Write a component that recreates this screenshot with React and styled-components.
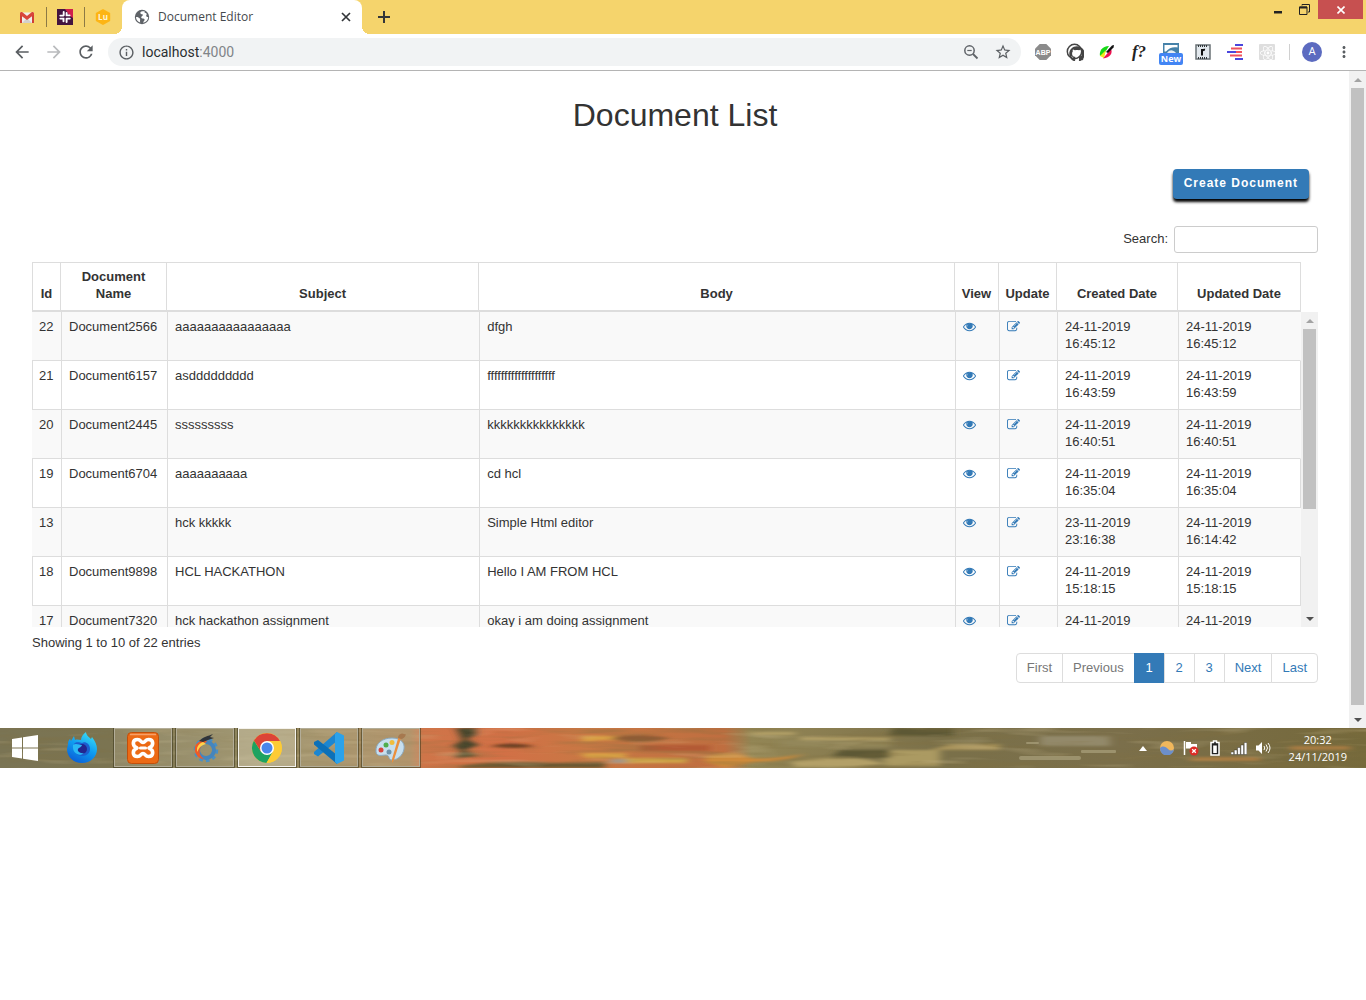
import React from "react";
import styled, { createGlobalStyle, css } from "styled-components";
import {
  MdArrowBack,
  MdArrowForward,
  MdRefresh,
  MdOutlineInfo,
  MdStarOutline,
  MdMoreVert,
} from "react-icons/md";
import { FaReact, FaGithub } from "react-icons/fa";

const GlobalStyle = createGlobalStyle`
  *, *::before, *::after { box-sizing: border-box; }
  body {
    margin: 0;
    background: #fff;
    font-family: "Liberation Sans", Arial, sans-serif;
    color: #333;
  }
  button, input { font: inherit; color: inherit; }
  button { border: 0; padding: 0; background: none; cursor: pointer; }
  svg { display: block; flex: none; }
`;

const uiFont = `"Open Sans", "Noto Sans", sans-serif`;

/* ---------- browser chrome ---------- */

const TabStrip = styled.header`
  display: flex;
  height: 34px;
  padding-left: 8px;
  background: #f5d46c;
  font-family: ${uiFont};
`;

const PinnedTab = styled.button`
  display: flex;
  align-items: center;
  justify-content: center;
  width: 38px;
  height: 34px;
`;

const PinDivider = styled.span`
  align-self: center;
  width: 1px;
  height: 20px;
  margin-right: -1px;
  background: #8c7a45;
`;

const ActiveTab = styled.div`
  display: flex;
  align-items: center;
  position: relative;
  width: 240px;
  padding: 0 8px 0 12px;
  gap: 8px;
  background: #fff;
  border-radius: 8px 8px 0 0;
  color: #45494d;
  font-size: 12px;
  line-height: 16px;

  &::before,
  &::after {
    content: "";
    position: absolute;
    bottom: 0;
    width: 8px;
    height: 8px;
  }
  &::before {
    left: -8px;
    background: radial-gradient(circle at 0 0, transparent 8px, #fff 8px);
  }
  &::after {
    right: -8px;
    background: radial-gradient(circle at 100% 0, transparent 8px, #fff 8px);
  }
`;

const TabTitle = styled.span`
  flex: 1;
`;

const TabButton = styled.button`
  display: flex;
  align-items: center;
  justify-content: center;
  width: ${(p) => p.$width}px;
  color: #333639;
`;

const WindowControls = styled.div`
  display: flex;
  margin-left: auto;
  padding-right: 3px;
  height: 19px;
`;

const WindowButton = styled.button`
  display: flex;
  align-items: center;
  justify-content: center;
  width: ${(p) => (p.$close ? 45 : 27)}px;
  background: ${(p) => (p.$close ? "#c75050" : "transparent")};
`;

const Toolbar = styled.nav`
  display: flex;
  align-items: center;
  height: 37px;
  padding: 0 6px;
  border-bottom: 1px solid #b4b4b4;
  background: #fff;
`;

const ToolButton = styled.button`
  display: flex;
  flex: none;
  align-items: center;
  justify-content: center;
  width: 32px;
  height: 28px;
  color: ${(p) => (p.$dim ? "#b9bbbd" : "#5a5e62")};
`;

const Omnibox = styled.div`
  display: flex;
  flex: 1;
  align-items: center;
  height: 28px;
  margin: 0 6px;
  padding: 0 2px;
  border-radius: 14px;
  background: #f1f3f4;
`;

const Address = styled.span`
  flex: 1;
  font-family: Roboto, sans-serif;
  font-size: 14px;
  line-height: 20px;
  color: #2b2e31;

  span { color: #808488; }
`;

const ToolDivider = styled.span`
  width: 1px;
  height: 16px;
  margin: 0 6px;
  background: #d0d0d0;
`;

const Avatar = styled.button`
  width: 20px;
  height: 20px;
  margin: 0 6px;
  border-radius: 50%;
  background: #5c6bc0;
  color: #fff;
  font-family: Roboto, sans-serif;
  font-size: 11px;
  line-height: 20px;
`;

const FunctionGlyph = styled.span`
  font: italic bold 17px/20px "Liberation Serif", serif;
  color: #222;
`;

const NewBadge = styled.span`
  display: flex;
  flex-direction: column;
  align-items: center;
  padding-top: 4px;

  span {
    width: 24px;
    border-radius: 2px;
    background: #4285f4;
    color: #fff;
    font: bold 9px/12px ${uiFont};
  }
`;

/* ---------- scrollbars ---------- */

const Track = styled.div`
  display: flex;
  flex: none;
  flex-direction: column;
  align-items: center;
  width: 17px;
  background: #f1f1f1;
`;

const Arrow = styled.span`
  display: flex;
  align-items: center;
  justify-content: center;
  width: 17px;
  height: 17px;

  &::before {
    content: "";
    border: 4px solid transparent;
    ${(p) =>
      p.$down
        ? css`border-top-color: #505050; border-bottom-width: 0;`
        : css`border-bottom-color: #a3a3a3; border-top-width: 0;`}
  }
`;

const ThumbLane = styled.div`
  flex: 1;
  width: 13px;
`;

const Thumb = styled.div`
  height: ${(p) => p.$size}%;
  background: #c1c1c1;
`;

const Scrollbar = ({ size }) => (
  <Track aria-hidden="true">
    <Arrow />
    <ThumbLane>
      <Thumb $size={size} />
    </ThumbLane>
    <Arrow $down />
  </Track>
);

/* ---------- page ---------- */

const Viewport = styled.div`
  display: flex;
`;

const Page = styled.main`
  flex: 1;
  min-width: 0;
  padding: 26px 31px 45px 32px;
  font-size: 13px;
  line-height: 17px;
`;

const Title = styled.h1`
  margin: 0 0 36px;
  font-size: 32px;
  font-weight: 400;
  line-height: 36px;
  text-align: center;
`;

const Actions = styled.div`
  display: flex;
  justify-content: flex-end;
  padding-right: 9px;
`;

const CreateButton = styled.button`
  height: 30px;
  padding: 0 11px 2px;
  border-radius: 4px;
  background: #337ab7;
  box-shadow: 0 3px 3px #000;
  color: #fff;
  font-size: 12px;
  font-weight: 700;
  letter-spacing: 1px;
`;

const SearchRow = styled.div`
  display: flex;
  align-items: center;
  justify-content: flex-end;
  gap: 6px;
  margin: 27px 0 9px;

  label { padding-bottom: 2px; }
`;

const SearchInput = styled.input`
  width: 144px;
  height: 27px;
  padding: 4px 9px;
  border: 1px solid #ccc;
  border-radius: 3px;
  background: #fff;
`;

const HeadArea = styled.div`
  padding-right: 17px;
`;

const Grid = styled.table`
  width: 100%;
  table-layout: fixed;
  border-collapse: separate;
  border-spacing: 0;
`;

const Col = styled.col`
  width: ${(p) => p.$width};
`;

const Th = styled.th`
  padding: 5px 4px 8px;
  border: solid #ddd;
  border-width: 1px 1px 2px 0;
  vertical-align: bottom;

  &:first-child { border-left-width: 1px; padding: 5px 3px 8px; }
`;

const ScrollArea = styled.div`
  display: flex;
  height: 315px;
`;

const ScrollBody = styled.div`
  flex: 1;
  min-width: 0;
  overflow: hidden;
`;

const Row = styled.tr`
  height: 49px;

  &:nth-child(odd) { background: #f9f9f9; }
  &:nth-child(even) td:first-child { border-left: 1px solid #ddd; padding-left: 6px; }
  &:nth-child(odd) td:last-child { border-right-color: #f9f9f9; }
`;

const Td = styled.td`
  padding: 6px 7px 8px;
  border: solid #ddd;
  border-width: 0 1px 1px 0;
  vertical-align: top;
`;

const IconLink = styled.a`
  display: inline-block;
  padding-top: 2px;
  color: #337ab7;
`;

const Info = styled.div`
  padding: 7px 0 2px;
`;

const Pager = styled.ul`
  display: flex;
  justify-content: flex-end;
  margin: 0;
  padding: 0;
  list-style: none;

  li + li { margin-left: -1px; }
  li:first-child a { border-radius: 4px 0 0 4px; }
  li:last-child a { border-radius: 0 4px 4px 0; }
`;

const PageLink = styled.a`
  display: block;
  min-width: 31px;
  height: 30px;
  padding: 5px 10px;
  border: 1px solid ${(p) => (p.$active ? "#337ab7" : "#ddd")};
  background: ${(p) => (p.$active ? "#337ab7" : "#fff")};
  color: ${(p) => (p.$active ? "#fff" : p.$disabled ? "#777" : "#337ab7")};
  line-height: 18px;
  text-align: center;
  text-decoration: none;
`;

/* ---------- taskbar ---------- */

const Taskbar = styled.footer`
  display: flex;
  position: relative;
  height: 40px;
  overflow: hidden;
  background: #756b49;
`;

const Wallpaper = styled.svg`
  position: absolute;
  inset: 0;
  width: 100%;
  height: 100%;
`;

const Apps = styled.div`
  display: flex;
  position: relative;
  gap: 4px;
`;

const AppButton = styled.button`
  display: flex;
  align-items: center;
  justify-content: center;
  width: ${(p) => p.$width || 58}px;
  height: 39px;
  ${(p) =>
    p.$open &&
    css`
      border: 1px solid ${p.$current ? "#f4f2ec" : "#b3ad98"};
      background: rgba(225, 215, 190, ${p.$current ? 0.45 : 0.2});
      outline: 1px solid rgba(50, 45, 20, 0.5);
    `}
`;

const Tray = styled.div`
  display: flex;
  position: relative;
  align-items: center;
  margin-left: auto;
  padding-right: 19px;
`;

const TrayButton = styled.button`
  display: flex;
  align-items: center;
  justify-content: center;
  width: 24px;
  height: 40px;
`;

const Clock = styled.div`
  margin-left: 14px;
  color: #fff;
  font-family: ${uiFont};
  font-size: 11px;
  line-height: 17px;
  text-align: center;
`;

/* ---------- drawings ---------- */

const GmailIcon = () => (
  <svg width="16" height="16" viewBox="0 0 16 16">
    <path d="M1 3.500h14V14H1z" fill="#efeeec" />
    <path d="M3 14 8 9l5 5z" fill="#d3d0cc" />
    <path d="M1 14V4l2 1.500V14zM15 14V4l-2 1.500V14z" fill="#cf4036" />
    <path d="M1 4.500C1 3 2.500 2.600 3.400 3.300L8 7l4.600-3.700C13.500 2.600 15 3 15 4.500v1.200L8 11 1 5.700z" fill="#d9453a" />
  </svg>
);

const SlackIcon = () => (
  <svg width="16" height="16" viewBox="0 0 16 16">
    <path d="M0 0h16v16H0z" fill="#42143f" />
    <path d="M8 0h8v9l-3-2z" fill="#d0204c" />
    <g stroke="#fff" strokeWidth="1.900" strokeLinecap="round">
      <path d="M6.700 3v3.200M3.300 6.600h3.200M9.600 4v2.400h3M3.300 9.600h3.200v2.600M9.600 9.600v3.400M9.600 9.600h3.200" fill="none" />
    </g>
  </svg>
);

const LuIcon = () => (
  <svg width="18" height="18" viewBox="0 0 18 18">
    <path d="M9 2l6.200 3.500v7L9 16l-6.200-3.500v-7z" fill="#fdb515" stroke="#fdb515" strokeWidth="2" strokeLinejoin="round" />
    <text x="9" y="12" fontSize="8" fontWeight="700" textAnchor="middle" fill="#fff4d8" fontFamily="Open Sans, sans-serif">Lu</text>
  </svg>
);

const GlobeIcon = () => (
  <svg width="16" height="16" viewBox="0 0 16 16">
    <circle cx="8" cy="8" r="7.200" fill="#5f6368" />
    <path d="M8.500 2.300C6.700 2.600 6 3.500 6.500 4.500s2 .3 2.300 1.300-1.300 1.200-1.600 2.400c-.2 1 1 1.200 2 1.300 1.100.2 1.600.8 1.300 1.700-.3.800-1.200 1.200-1.300 2.500 3-.6 5-3 5-5.700-1 .3-1.700 0-2-.9-.3-1 .8-1.300.4-2.300-.3-.8-1.500-.6-2-1.200-.3-.5.200-1 .1-1.300z" fill="#fff" />
    <path d="M2 8c1.500-.2 3 .4 3.800 1.500.7 1 .2 1.800.2 2.800 0 .6.300 1 .2 1.300C3.800 13 2 10.800 2 8z" fill="#fff" />
  </svg>
);

const CloseTabIcon = () => (
  <svg width="10" height="10" viewBox="0 0 10 10" stroke="#333639" strokeWidth="1.700">
    <path d="M1 1l8 8M9 1 1 9" />
  </svg>
);

const NewTabIcon = () => (
  <svg width="12" height="12" viewBox="0 0 12 12" stroke="#333639" strokeWidth="2">
    <path d="M6 0v12M0 6h12" />
  </svg>
);

const ZoomOutIcon = () => (
  <svg width="16" height="16" viewBox="0 0 16 16" fill="none" stroke="#5f6368">
    <circle cx="6.500" cy="6.500" r="4.700" strokeWidth="1.500" />
    <path d="M10 10l4.500 4.500" strokeWidth="1.800" />
    <path d="M4.300 6.500h4.400" strokeWidth="1.200" />
  </svg>
);

const AbpIcon = () => (
  <svg width="18" height="18" viewBox="0 0 18 18">
    <path d="M5.700 1h6.600L17 5.700v6.600L12.300 17H5.700L1 12.300V5.700z" fill="#8b8b8b" />
    <text x="9" y="12" fontSize="7" fontWeight="700" textAnchor="middle" fill="#fff" fontFamily="Liberation Sans, sans-serif">ABP</text>
  </svg>
);

const GitSearchIcon = () => (
  <svg width="18" height="18" viewBox="0 0 18 18">
    <FaGithub x="3" y="3" width="11" height="11" color="#444" />
    <circle cx="8.500" cy="8.500" r="7.200" fill="none" stroke="#444" strokeWidth="1.500" />
    <path d="M13.500 13.500 16.800 16.800" stroke="#444" strokeWidth="2.200" />
  </svg>
);

const BrushIcon = () => (
  <svg width="18" height="18" viewBox="0 0 18 18">
    <path d="M2 13C1 8 4 3.500 11 3L6 11z" fill="#16d916" />
    <path d="M2 13 8 7l-2 8z" fill="#f3ea1b" />
    <path d="M5 15.500 13 6c2 4-1 9-8 9.500z" fill="#ee1150" />
    <path d="M8 9 14 2.500l2-.5-.5 2.500L10 10z" fill="#111" />
  </svg>
);

const PictureIcon = () => (
  <svg width="16" height="10" viewBox="0 0 16 10">
    <path d="M0 0h16v10H0z" fill="#4682a9" />
    <path d="M1.500 2h13v2.500C10 3.500 6 5 3 8.500H1.500z" fill="#fff" />
    <path d="M4 10c3-4 6-3 9 0z" fill="#e6eef3" />
  </svg>
);

const ReaderIcon = () => (
  <svg width="16" height="16" viewBox="0 0 16 16">
    <rect x="1" y="1" width="14" height="14" fill="#e3e9ee" stroke="#6a7176" strokeWidth="1.500" />
    <path d="M3 2h10M3 14h10" stroke="#33383b" strokeWidth="2" strokeDasharray="1 1" />
    <path d="M7 5v6.500M7 7.200C7.500 5.800 8.500 5.500 10 5.800" stroke="#111" strokeWidth="2" fill="none" />
  </svg>
);

const BarsIcon = () => (
  <svg width="16" height="16" viewBox="0 0 16 16">
    <path d="M8 1h8M0 8h10M8 15h8" stroke="#4a46dd" strokeWidth="2" />
    <path d="M4 4.500h11M3 11.500h12M9 8h6" stroke="#f0525f" strokeWidth="2" />
  </svg>
);

const ReactTile = () => (
  <svg width="16" height="16" viewBox="0 0 16 16">
    <rect width="16" height="16" rx="1" fill="#dedede" />
    <FaReact x="1" y="1" width="14" height="14" color="#fff" />
  </svg>
);

const EyeIcon = () => (
  <svg width="13" height="13" viewBox="0 0 1792 1792" fill="currentColor">
    <path d="M1664 960q-152-236-381-353 61 104 61 225 0 185-131.500 316.500t-316.500 131.500-316.500-131.500-131.500-316.500q0-121 61-225-229 117-381 353 133 205 333.500 326.500t434.500 121.500 434.500-121.500 333.500-326.500zm-720-384q0-20-14-34t-34-14q-125 0-214.500 89.500t-89.500 214.500q0 20 14 34t34 14 34-14 14-34q0-86 61-147t147-61q20 0 34-14t14-34zm848 384q0 34-20 69-140 230-376.500 368.500t-499.500 138.500-499.500-139-376.500-368q-20-35-20-69t20-69q140-229 376.500-368t499.500-139 499.500 139 376.500 368q20 35 20 69z" />
    <circle cx="896" cy="832" r="300" />
  </svg>
);

const EditIcon = () => (
  <svg width="13" height="13" viewBox="0 0 1792 1792" fill="currentColor">
    <path d="M888 1184l116-116-152-152-116 116v56h96v96h56zm440-720q-16-16-33 1l-350 350q-17 17-1 33t33-1l350-350q17-17 1-33zm80 594v190q0 119-84.500 203.500t-203.500 84.500h-832q-119 0-203.500-84.500t-84.500-203.500v-832q0-119 84.500-203.500t203.500-84.500h832q63 0 117 25 15 7 18 23 3 17-9 29l-49 49q-14 14-32 8-23-6-45-6h-832q-66 0-113 47t-47 113v832q0 66 47 113t113 47h832q66 0 113-47t47-113v-126q0-13 9-22l64-64q15-15 35-7t20 29zm-96-738l288 288-672 672h-288v-288zm444 132l-92 92-288-288 92-92q28-28 68-28t68 28l152 152q28 28 28 68t-28 68z" />
  </svg>
);

const WindowsIcon = () => (
  <svg width="28" height="26" viewBox="0 0 28 26" fill="#fff">
    <path d="M1 4 11 2.500V12.500H1zM12 2.300 27 0v12.500H12zM1 13.500h10v10L1 22zM12 13.500h15V26L12 23.700z" />
  </svg>
);

const FirefoxIcon = () => (
  <svg width="32" height="32" viewBox="0 0 32 32">
    <defs>
      <linearGradient id="fx" x1="0.800" y1="0" x2="0.300" y2="1">
        <stop offset="0" stopColor="#3fe1f5" />
        <stop offset="0.500" stopColor="#0f9df0" />
        <stop offset="1" stopColor="#0a5fd8" />
      </linearGradient>
    </defs>
    <path d="M2 12c0-3 1-4 2-5l1 2 3-5 1 4c2-1 4 0 6 0 0-3 2-6 5-8 0 3 3 5 5 7l1-2c3 4 5 8 5 12 0 8-6.500 14-15 14S1 25 1 17z" fill="url(#fx)" />
    <path d="M8 12c3-3 6-1 8-1 3-2 8 1 8 6 0 4-3 7-8 7s-8-4-8-8z" fill="#1b5fd0" />
    <circle cx="16" cy="17" r="5" fill="#23268f" />
    <path d="M7 13c3-2 6 0 9 0-1 3-3 2-4 4s2 5 6 4c-4 4-12 1-11-8z" fill="#29b9f5" />
  </svg>
);

const XamppIcon = () => (
  <svg width="32" height="32" viewBox="0 0 32 32">
    <rect x="0.500" y="0.500" width="31" height="31" rx="4" fill="#ec6a15" stroke="#c14f0b" />
    <path d="M3 2.500h26" stroke="#f7a06a" strokeWidth="1.500" />
    <path
      d="M10 16C5 14 5 7.500 10.500 7.500c3.500 0 3 3 5.500 3s2-3 5.500-3C27 7.500 27 14 22 16c5 2 5 8.500-.5 8.500-3.500 0-3-3-5.500-3s-2 3-5.500 3C5 24.500 5 18 10 16z"
      fill="none"
      stroke="#fff"
      strokeWidth="3.600"
      strokeLinejoin="round"
    />
    <path d="M13.500 16h5" stroke="#fff" strokeWidth="3.200" strokeLinecap="round" />
  </svg>
);

const GearIcon = () => (
  <svg width="28" height="30" viewBox="0 0 28 30">
    <circle cx="15" cy="17" r="10.500" fill="none" stroke="#4a8fc4" strokeWidth="3.500" strokeDasharray="3.500 3" />
    <circle cx="15" cy="17" r="8" fill="none" stroke="#4585bd" strokeWidth="4" />
    <path d="M14 7C6 8 3 13 4 18s5 8 9 8c-4-3-5-6-4-10s3-6 7-7z" fill="#ee5a26" />
    <path d="M12 9c-5 2-7 6-5.500 10C8 14 11 12 15 11z" fill="#ffd24a" />
    <path d="M8 8c4-4 9-5 14-7l-3 3 4 1-6 2-5 2z" fill="#30343a" />
  </svg>
);

const ChromeIcon = () => (
  <svg width="30" height="30" viewBox="0 0 30 30">
    <circle cx="15" cy="15" r="15" fill="#fdcb35" />
    <path d="M2 7.500A15 15 0 0 0 14.500 30L21 18.500 15 15 9 18.500z" fill="#1da261" />
    <path d="M2 7.500 9 18.500 15 8h13A15 15 0 0 0 2 7.500z" fill="#dc4437" />
    <path d="M28 8A15 15 0 0 1 14.500 30L21 18.500 21 8z" fill="#fdcb35" />
    <circle cx="15" cy="15" r="7" fill="#fff" />
    <circle cx="15" cy="15" r="5.500" fill="#4a86ec" />
  </svg>
);

const VsCodeIcon = () => (
  <svg width="32" height="32" viewBox="0 0 32 32">
    <path d="M24 0v9L5 24.500 1 22v-2z" fill="#1c86d1" />
    <path d="M24 32v-9L5 8 1 10v2.500z" fill="#0c70b8" />
    <path d="M24 0l7 3.500v25L24 32l-2-2V2z" fill="#2ba2ea" />
  </svg>
);

const PaintIcon = () => (
  <svg width="32" height="32" viewBox="0 0 32 32">
    <path d="M1 20C0 11 8 6 17 6s13 5 12 11-6 11-12 11c-4 0-2-5-6-5s-9 2-10-3z" fill="#c7dfee" stroke="#8aa9bf" />
    <circle cx="6" cy="18" r="2.500" fill="#d8453c" />
    <circle cx="11" cy="13" r="2.500" fill="#4fae4d" />
    <circle cx="17" cy="10.500" r="2.500" fill="#f0bd3c" />
    <circle cx="14" cy="20" r="2.500" fill="#6d93ab" />
    <path d="M26 6 19 28l-2 3 0-4L23.500 5z" fill="#ea8f3d" />
    <path d="M23 6c0-3 2-4 4-4.500l4 1C30 5 28 7 26 7z" fill="#a6794f" />
  </svg>
);

const TaskbarWallpaper = () => (
  <Wallpaper viewBox="0 0 1366 40" preserveAspectRatio="none" aria-hidden="true">
    <defs>
      <linearGradient id="ground">
        <stop offset="0" stopColor="#7a7454" />
        <stop offset="0.080" stopColor="#7b7451" />
        <stop offset="0.200" stopColor="#948a61" />
        <stop offset="0.300" stopColor="#a88558" />
        <stop offset="0.310" stopColor="#cf7549" />
        <stop offset="0.370" stopColor="#d27046" />
        <stop offset="0.430" stopColor="#c87844" />
        <stop offset="0.530" stopColor="#bf6e40" />
        <stop offset="0.550" stopColor="#938655" />
        <stop offset="0.640" stopColor="#84784e" />
        <stop offset="0.690" stopColor="#7a7049" />
        <stop offset="0.820" stopColor="#7b6f4b" />
        <stop offset="1" stopColor="#75693b" />
      </linearGradient>
      <filter id="streaks" x="0" y="0" width="100%" height="100%">
        <feTurbulence type="fractalNoise" baseFrequency="0.012 0.150" numOctaves="3" seed="7" />
        <feColorMatrix values="0 0 0 0 0.220  0 0 0 0 0.160  0 0 0 0 0.050  3 0 0 0 -1.400" />
      </filter>
      <filter id="glints" x="0" y="0" width="100%" height="100%">
        <feTurbulence type="fractalNoise" baseFrequency="0.014 0.160" numOctaves="2" seed="21" />
        <feColorMatrix values="0 0 0 0 0.760  0 0 0 0 0.640  0 0 0 0 0.380  0 4 0 0 -2.200" />
      </filter>
      <filter id="soft">
        <feGaussianBlur stdDeviation="4 1" />
      </filter>
    </defs>
    <rect width="1366" height="40" fill="url(#ground)" />
    <g filter="url(#soft)">
      <path d="M456 0h20v7l-9 4 12 6-14 5 12 6-22 2 6-7-8-5 9-6z" fill="#45452a" />
      <path d="M490 18q20-5 45 0-20 4-45 0z" fill="#6c3c20" />
      <path d="M460 38q40-6 95-3l50-1v6H460z" fill="#6d5930" />
      <path d="M582 8h60v4h-40l-20 2zM580 25h46v5h-40z" fill="#d9a145" />
      <path d="M610 10q25-6 60 0-30 8-60 0z" fill="#8f5c34" />
      <path d="M625 30h62v5h-80z" fill="#cfa347" />
      <path d="M640 17h70v6h-70z" fill="#b35a34" />
      <path d="M705 28q30-6 40 0t60-2q-20 8-50 8l-30 6-20-6z" fill="#ce8a3a" />
      <path d="M612 31h14v4h-16z" fill="#9c9088" />
      <path d="M745 4h50v3h-40zM800 9h90v3h-90zM790 34q60-10 95 2l-30 3h-60z" fill="#b3a068" />
      <path d="M780 12h110v7H780z" fill="#93875a" />
      <path d="M880 22h60v16h-54z" fill="#ab9a62" />
      <path d="M893 0h60v8h-65zM840 22h50v8h-60z" fill="#5d5935" />
      <path d="M1040 8h70v10h-70z" fill="#93896a" />
      <path d="M950 16h50v6h-70z" fill="#a59058" />
      <path d="M1190 29h70v4h-70zM1290 18h60v4h-60z" fill="#a77b43" />
    </g>
    <rect width="1366" height="40" filter="url(#streaks)" opacity="0.320" />
    <rect width="1366" height="40" filter="url(#glints)" opacity="0.200" />
    <g fill="#a59b76" opacity="0.800">
      <rect x="1019" y="28" width="62" height="4" rx="2" />
      <rect x="1026" y="14" width="13" height="2" rx="1" />
      <rect x="1081" y="22" width="35" height="3" rx="1" />
    </g>
  </Wallpaper>
);

/* ---------- data ---------- */

const headings = ["Id", "Document Name", "Subject", "Body", "View", "Update", "Created Date", "Updated Date"];

const rows = [
  ["22", "Document2566", "aaaaaaaaaaaaaaaa", "dfgh", "24-11-2019 16:45:12", "24-11-2019 16:45:12"],
  ["21", "Document6157", "asddddddddd", "ffffffffffffffffffff", "24-11-2019 16:43:59", "24-11-2019 16:43:59"],
  ["20", "Document2445", "sssssssss", "kkkkkkkkkkkkkkk", "24-11-2019 16:40:51", "24-11-2019 16:40:51"],
  ["19", "Document6704", "aaaaaaaaaa", "cd hcl", "24-11-2019 16:35:04", "24-11-2019 16:35:04"],
  ["13", "", "hck kkkkk", "Simple Html editor", "23-11-2019 23:16:38", "24-11-2019 16:14:42"],
  ["18", "Document9898", "HCL HACKATHON", "Hello I AM FROM HCL", "24-11-2019 15:18:15", "24-11-2019 15:18:15"],
  ["17", "Document7320", "hck hackathon assignment", "okay i am doing assignment", "24-11-2019", "24-11-2019"],
];

const pages = [
  { label: "First", disabled: true },
  { label: "Previous", disabled: true },
  { label: "1", active: true },
  { label: "2" },
  { label: "3" },
  { label: "Next" },
  { label: "Last" },
];

const extensions = [
  ["Adblock Plus", <AbpIcon />],
  ["GitHub search", <GitSearchIcon />],
  ["Color picker", <BrushIcon />],
  ["Font finder", <FunctionGlyph>f?</FunctionGlyph>],
  ["Screenshot", <NewBadge><PictureIcon /><span>New</span></NewBadge>],
  ["Reader", <ReaderIcon />],
  ["Outline", <BarsIcon />],
  ["React tools", <ReactTile />],
];

const Columns = ({ first, last }) => (
  <colgroup>
    {[first, "106px", "24.6%", "auto", "44px", "58px", "121px", last].map((width, i) => (
      <Col key={i} $width={width} />
    ))}
  </colgroup>
);

export default function App() {
  return (
    <>
      <GlobalStyle />
      <TabStrip>
        <PinnedTab aria-label="Gmail"><GmailIcon /></PinnedTab>
        <PinDivider />
        <PinnedTab aria-label="Slack"><SlackIcon /></PinnedTab>
        <PinDivider />
        <PinnedTab aria-label="Lu"><LuIcon /></PinnedTab>
        <ActiveTab>
          <GlobeIcon />
          <TabTitle>Document Editor</TabTitle>
          <TabButton $width={16} aria-label="Close tab"><CloseTabIcon /></TabButton>
        </ActiveTab>
        <TabButton $width={44} aria-label="New tab"><NewTabIcon /></TabButton>
        <WindowControls>
          <WindowButton aria-label="Minimize">
            <svg width="10" height="10" viewBox="0 0 10 10"><path d="M1 6h8v2.500H1z" fill="#222" /></svg>
          </WindowButton>
          <WindowButton aria-label="Restore">
            <svg width="11" height="11" viewBox="0 0 11 11" fill="none" stroke="#222">
              <path d="M3 1.500V.5h7.500V8H9" />
              <path d="M.5 3h7.500v7.500H.5z" />
              <path d="M.5 3.500h7.500" strokeWidth="2" />
            </svg>
          </WindowButton>
          <WindowButton $close aria-label="Close">
            <svg width="8" height="8" viewBox="0 0 8 8"><path d="M.5.5l7 7M7.500.5l-7 7" stroke="#fff" strokeWidth="1.600" /></svg>
          </WindowButton>
        </WindowControls>
      </TabStrip>

      <Toolbar>
        <ToolButton aria-label="Back"><MdArrowBack size={20} /></ToolButton>
        <ToolButton $dim aria-label="Forward"><MdArrowForward size={20} /></ToolButton>
        <ToolButton aria-label="Reload"><MdRefresh size={20} /></ToolButton>
        <Omnibox>
          <ToolButton aria-label="Site information"><MdOutlineInfo size={17} /></ToolButton>
          <Address>localhost<span>:4000</span></Address>
          <ToolButton aria-label="Zoom"><ZoomOutIcon /></ToolButton>
          <ToolButton aria-label="Bookmark"><MdStarOutline size={18} /></ToolButton>
        </Omnibox>
        {extensions.map(([label, icon]) => (
          <ToolButton key={label} aria-label={label}>{icon}</ToolButton>
        ))}
        <ToolDivider />
        <Avatar>A</Avatar>
        <ToolButton aria-label="Menu"><MdMoreVert size={18} /></ToolButton>
      </Toolbar>

      <Viewport>
        <Page>
          <Title>Document List</Title>
          <Actions>
            <CreateButton>Create Document</CreateButton>
          </Actions>
          <SearchRow>
            <label htmlFor="search">Search:</label>
            <SearchInput id="search" type="search" />
          </SearchRow>
          <HeadArea>
            <Grid>
              <Columns first="29px" last="123px" />
              <thead>
                <tr>{headings.map((h) => <Th key={h} scope="col">{h}</Th>)}</tr>
              </thead>
            </Grid>
          </HeadArea>
          <ScrollArea>
            <ScrollBody>
              <Grid aria-label="Document List">
                <Columns first="30px" last="122px" />
                <tbody>
                  {rows.map(([id, name, subject, body, created, updated]) => (
                    <Row key={id}>
                      <Td>{id}</Td>
                      <Td>{name}</Td>
                      <Td>{subject}</Td>
                      <Td>{body}</Td>
                      <Td><IconLink href="#view" aria-label="View"><EyeIcon /></IconLink></Td>
                      <Td><IconLink href="#update" aria-label="Update"><EditIcon /></IconLink></Td>
                      <Td>{created}</Td>
                      <Td>{updated}</Td>
                    </Row>
                  ))}
                </tbody>
              </Grid>
            </ScrollBody>
            <Scrollbar size={64} />
          </ScrollArea>
          <Info>Showing 1 to 10 of 22 entries</Info>
          <Pager>
            {pages.map(({ label, active, disabled }) => (
              <li key={label}>
                <PageLink href="#page" $active={active} $disabled={disabled}>{label}</PageLink>
              </li>
            ))}
          </Pager>
        </Page>
        <Scrollbar size={99} />
      </Viewport>

      <Taskbar>
        <TaskbarWallpaper />
        <Apps>
          <AppButton $width={50} aria-label="Start"><WindowsIcon /></AppButton>
          <AppButton $width={56} aria-label="Firefox"><FirefoxIcon /></AppButton>
          <AppButton $open aria-label="XAMPP"><XamppIcon /></AppButton>
          <AppButton $open aria-label="Settings"><GearIcon /></AppButton>
          <AppButton $open $current aria-label="Chrome"><ChromeIcon /></AppButton>
          <AppButton $open aria-label="Code"><VsCodeIcon /></AppButton>
          <AppButton $open aria-label="Paint"><PaintIcon /></AppButton>
        </Apps>
        <Tray>
          <TrayButton aria-label="Hidden icons">
            <svg width="8" height="5" viewBox="0 0 8 5"><path d="M0 5 4 0l4 5z" fill="#fff" /></svg>
          </TrayButton>
          <TrayButton aria-label="Weather">
            <svg width="14" height="14" viewBox="0 0 14 14">
              <circle cx="7" cy="7" r="7" fill="#f0b75c" />
              <path d="M0 7c3-3 6-1 8 1s4 2 6 0A7 7 0 0 1 0 7z" fill="#6c8fcb" />
            </svg>
          </TrayButton>
          <TrayButton aria-label="Action center">
            <svg width="16" height="16" viewBox="0 0 16 16">
              <path d="M1.500 1v14" stroke="#fff" strokeWidth="1.500" />
              <path d="M3 2h5v2h6v6H8V8.500H3z" fill="#fff" />
              <circle cx="11" cy="11" r="4.500" fill="#dd2c26" />
              <path d="M9.200 9.200l3.600 3.600M12.800 9.200 9.200 12.800" stroke="#fff" strokeWidth="1.300" />
            </svg>
          </TrayButton>
          <TrayButton aria-label="Battery">
            <svg width="10" height="16" viewBox="0 0 10 16">
              <path d="M3.500 1h3v1.500h2.500V15H1V2.500h2.500z" fill="#222" stroke="#fff" strokeWidth="1.500" />
              <path d="M3.200 5.500h3.600v7.500H3.200z" fill="#fff" />
            </svg>
          </TrayButton>
          <TrayButton aria-label="Network">
            <svg width="16" height="13" viewBox="0 0 16 13" fill="#fff" stroke="#222" strokeWidth="0.400">
              <path d="M0 10h2.700v2.500H0zM3.300 8h2.700v4.500H3.300zM6.600 5.500h2.700v7H6.600zM9.900 3h2.700v9.500H9.900zM13.200.5h2.700v12h-2.700z" />
            </svg>
          </TrayButton>
          <TrayButton aria-label="Volume">
            <svg width="16" height="14" viewBox="0 0 16 14">
              <path d="M1 4.500h2.500L7 1v12L3.500 9.500H1z" fill="#fff" />
              <path d="M9 5q1.500 2 0 4M11 3.500q3 3.500 0 7M13 2q4 5 0 10" fill="none" stroke="#fff" />
            </svg>
          </TrayButton>
          <Clock>
            <div>20:32</div>
            <div>24/11/2019</div>
          </Clock>
        </Tray>
      </Taskbar>
    </>
  );
}
